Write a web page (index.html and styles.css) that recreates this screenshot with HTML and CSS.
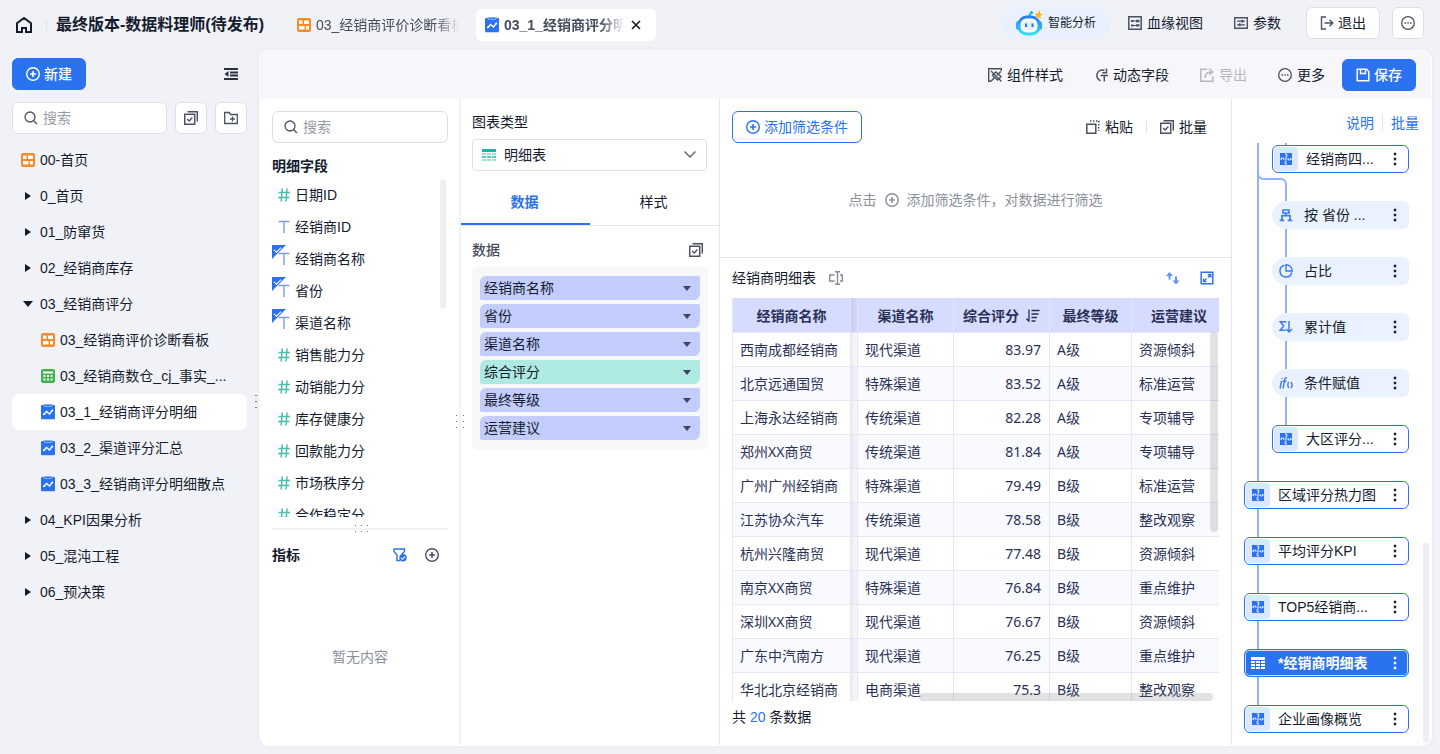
FILE: index.html
```html
<!DOCTYPE html>
<html lang="zh-CN">
<head>
    <meta charset="UTF-8">
    <meta name="viewport" content="width=device-width, initial-scale=1.0">
    <title>最终版本-数据料理师</title>
    <link rel="stylesheet" href="styles.css">
</head>
<body>
    <!-- Icon sprite -->
    <svg class="sprite" aria-hidden="true">
        <symbol id="i-home" viewBox="0 0 16 16"><path d="M6 15H1V6.200L8 1l7 5.200V15h-5v-4H6z" fill="none" stroke="currentColor" stroke-width="2"/></symbol>
        <symbol id="i-board" viewBox="0 0 14 14"><rect width="14" height="14" rx="2" fill="#fa8a25"/><path d="M2 2.500h3.500v3.500H2zM7 2.500h5v3.500H7zM2 8h5.500v3.500H2zM9 8h3v3.500H9z" fill="#fff"/></symbol>
        <symbol id="i-sheet" viewBox="0 0 14 14"><rect width="14" height="14" rx="2" fill="#3fb24f"/><path d="M2 2.500h10v2H2zM2.500 6h2v2h-2zM6 6h2v2H6zM9.500 6h2v2h-2zM2.500 9.500h2v2h-2zM6 9.500h2v2H6zM9.500 9.500h2v2h-2z" fill="#fff"/></symbol>
        <symbol id="i-chart" viewBox="0 0 14 16"><path d="M0 14h14v2H0z" fill="#c5d8fc"/><rect y="1" width="14" height="14" rx="1" fill="#2b72f0"/><path d="M2.500 0h9v1.500L10 3H4L2.500 1.500z" fill="#8bb2f8"/><path d="M4 1h6v1H4z" fill="#2b72f0"/><path d="M3 10.500l2.500-3 3 2.500 3-4" fill="none" stroke="#fff" stroke-width="1.300"/><circle cx="3" cy="10.300" r="1" fill="#fff"/><circle cx="11.300" cy="6.400" r="1" fill="#fff"/></symbol>
        <symbol id="i-close" viewBox="0 0 10 10"><path d="M1 1l8 8M9 1L1 9" stroke="currentColor" stroke-width="1.600"/></symbol>
        <symbol id="i-plus" viewBox="0 0 14 14"><circle cx="7" cy="7" r="6.300" fill="none" stroke="currentColor" stroke-width="1.400"/><path d="M7 4v6M4 7h6" stroke="currentColor" stroke-width="1.600"/></symbol>
        <symbol id="i-fold" viewBox="0 0 14 12"><path d="M0 1h14M6 4.500h8M6 7.500h8M0 11h14" stroke="currentColor" stroke-width="1.800"/><path d="M4.500 3v6L.5 6z" fill="currentColor"/></symbol>
        <symbol id="i-search" viewBox="0 0 14 14"><circle cx="6" cy="6" r="5" fill="none" stroke="currentColor" stroke-width="1.300"/><path d="M9.700 9.700l3.300 3.300" stroke="currentColor" stroke-width="1.300"/></symbol>
        <symbol id="i-batch" viewBox="0 0 14 14"><path d="M.7 3.200h10v10H.7zM3.500.8h9.800v9.700" fill="none" stroke="currentColor" stroke-width="1.500"/><path d="M3.200 8l2 2 3.200-3.500" fill="none" stroke="currentColor" stroke-width="1.300"/></symbol>
        <symbol id="i-folder" viewBox="0 0 14 14"><path d="M.7 1.500h4.500l1.500 2h6.600v9H.7z" fill="none" stroke="currentColor" stroke-width="1.300"/><path d="M8.500 5.500v5M6 8h5" stroke="currentColor" stroke-width="1.300"/></symbol>
        <symbol id="i-robot" viewBox="0 0 28 26">
            <defs><linearGradient id="robot" x1="0" y1="0" x2="0" y2="1"><stop offset="0" stop-color="#2f7bf6"/><stop offset="1" stop-color="#2be0fb"/></linearGradient></defs>
            <path d="M14 6l2-3" stroke="#19b4ee" stroke-width="2"/><circle cx="16.500" cy="2.500" r="1.600" fill="#19b4ee"/>
            <rect x="1" y="11" width="5" height="9" rx="2.500" fill="#3aa4f8"/><rect x="22" y="11" width="5" height="9" rx="2.500" fill="#3aa4f8"/>
            <rect x="4" y="7" width="20" height="17" rx="7.500" fill="#fff" stroke="url(#robot)" stroke-width="3"/>
            <rect x="7.500" y="10.500" width="13" height="9.500" rx="4.500" fill="#e4f1ff"/>
            <path d="M11 13.500v3.500M17.500 13.500v3.500" stroke="#2b6df3" stroke-width="2"/>
            <path d="M24.500 0l.8 3.500 2.700.5-2.500 1.800.5 3-2.700-1.600-2.600 1.300.8-2.500L19.500 3.800l3-.2z" fill="#ffb31f"/>
        </symbol>
        <symbol id="i-lineage" viewBox="0 0 14 14"><path d="M.8.8h12.400v12.400H.8z" fill="none" stroke="currentColor" stroke-width="1.500"/><path d="M3 4h2.500v2H3zM3 8.500h2.500v2H3zM8 3.800h3.500v2.400H8zM8 8.200h3.500v2.400H8zM5 4.500h3v1H5zM5 9h3v1H5z" fill="currentColor"/></symbol>
        <symbol id="i-param" viewBox="0 0 14 14"><path d="M.7 1.700h12.600v10.600H.7z" fill="none" stroke="currentColor" stroke-width="1.400"/><path d="M3 5.200h8M3 8.800h8" stroke="currentColor" stroke-width="1.200"/><path d="M7.500 3.700h1.700v3H7.500zM4.800 7.300h1.700v3H4.800z" fill="currentColor"/></symbol>
        <symbol id="i-exit" viewBox="0 0 14 14"><path d="M6 1H1.500v12H6M4.500 7h8M9.500 3.700L12.800 7l-3.300 3.300" fill="none" stroke="currentColor" stroke-width="1.400"/></symbol>
        <symbol id="i-more" viewBox="0 0 14 14"><circle cx="7" cy="7" r="6.300" fill="none" stroke="currentColor" stroke-width="1.300"/><path d="M3.500 6.300H5v1.500H3.500zM6.300 6.300h1.500v1.500H6.300zM9 6.300h1.500v1.500H9z" fill="currentColor"/></symbol>
        <symbol id="i-style" viewBox="0 0 14 14"><path d="M13.300 3V.7H.7v12.600H3" fill="none" stroke="currentColor" stroke-width="1.400"/><path d="M3 3l10.500 10.500M12.800 3.500L9 7.200M6.500 9.500L3 13.300M4.500 7.200L8 4l5 4.800L9.500 12z" fill="none" stroke="currentColor" stroke-width="1.400"/></symbol>
        <symbol id="i-dynamic" viewBox="0 0 14 14"><path d="M10.500 2.300A5.600 5.600 0 1 0 6.500 12.800" fill="none" stroke="currentColor" stroke-width="1.500"/><path d="M12.500.5v4.300H8.300M6.500 7.500H14M10.300 7.500v6" fill="none" stroke="currentColor" stroke-width="1.500"/></symbol>
        <symbol id="i-export" viewBox="0 0 14 14"><path d="M7 1.200H.8v12h12V8" fill="none" stroke="currentColor" stroke-width="1.500"/><path d="M5 10c0-4 2-6 6-6M9 .8L12.800 4 9 7" fill="none" stroke="currentColor" stroke-width="1.500"/></symbol>
        <symbol id="i-save" viewBox="0 0 14 14"><path d="M1.200 1.200h9.300l2.300 2.300v9.300H1.200z" fill="none" stroke="currentColor" stroke-width="1.500"/><path d="M4.500 1v4.500h5V1" fill="none" stroke="currentColor" stroke-width="1.500"/></symbol>
        <symbol id="i-paste" viewBox="0 0 14 14"><path d="M.8 4.200h9v9h-9z" fill="none" stroke="currentColor" stroke-width="1.500"/><path d="M4 1h9.500M12.700 1v10" fill="none" stroke="currentColor" stroke-width="1.500" stroke-dasharray="1.500 1.500"/></symbol>
        <symbol id="i-table" viewBox="0 0 14 12"><path d="M0 0h14v3H0z" fill="#1fb1a4"/><path d="M0 4h4v2H0zM5 4h4v2H5zM10 4h4v2h-4zM0 10h4v2H0zM5 10h4v2H5zM10 10h4v2h-4z" fill="#9fe0da"/><path d="M0 7h4v2H0zM5 7h4v2H5zM10 7h4v2h-4z" fill="#5cc9bf"/></symbol>
        <symbol id="i-table-white" viewBox="0 0 14 12"><path d="M0 0h14v3H0zM0 4h4v2H0zM5 4h4v2H5zM10 4h4v2h-4zM0 7h4v2H0zM5 7h4v2H5zM10 7h4v2h-4zM0 10h4v2H0zM5 10h4v2H5zM10 10h4v2h-4z" fill="#fff"/></symbol>
        <symbol id="i-num" viewBox="0 0 12 14"><path d="M4.200.5L3.200 13.500M9 .5L8 13.500M.5 4.500h11.500M0 9.500h11.500" fill="none" stroke="#4dbbae" stroke-width="1.500"/></symbol>
        <symbol id="i-text" viewBox="0 0 12 14"><path d="M.5 1.500h11M6 1.500V13" fill="none" stroke="#8099e0" stroke-width="1.400"/></symbol>
        <symbol id="i-filter" viewBox="0 0 14 14"><path d="M7 12.500H4V7L1 3.500V1h10.500v2.500L8.500 6.500" fill="none" stroke="#2b72f0" stroke-width="1.400"/><circle cx="10" cy="9.800" r="3.700" fill="#2b72f0"/><path d="M8 9.800l1.500 1.500 2.500-2.700" fill="none" stroke="#fff" stroke-width="1.100"/></symbol>
        <symbol id="i-rename" viewBox="0 0 14 14"><path d="M5.500 4H.7v6h4.800M11 4h2.300v6H11M6 .7h5M6 13.300h5M8.500.7v12.600" fill="none" stroke="currentColor" stroke-width="1.400"/></symbol>
        <symbol id="i-swap" viewBox="0 0 14 14"><path d="M3.500 8.500V4M10 5.500V10" stroke="#5f93f5" stroke-width="2"/><path d="M3.500 1L7 5H0zM10 13.500L6.500 9.500h7z" fill="#5f93f5"/></symbol>
        <symbol id="i-full" viewBox="0 0 14 14"><path d="M1.200 1.200h11.600v11.600H1.200z" fill="none" stroke="#2b72f0" stroke-width="1.500"/><path d="M7.800 3.500h3v3M6.500 10.500h-3v-3M10.500 3.800L7.800 6.500M3.800 10.200l2.700-2.700" fill="none" stroke="#2b72f0" stroke-width="1.300"/></symbol>
        <symbol id="i-sort" viewBox="0 0 14 14"><path d="M3 .5v12M.5 9.500L3 12.500" fill="none" stroke="currentColor" stroke-width="1.300"/><path d="M5.500 1.500h8M5.500 5h7M5.500 8.500h5.500M5.500 12h4" stroke="currentColor" stroke-width="1.300"/></symbol>
        <symbol id="i-puzzle" viewBox="0 0 12 12"><path d="M0 0h12v12H0z" fill="#2b72f0"/><path d="M6 0v1.500M6 4v4M6 10.500V12M0 6h1.500M4 6h4M10.500 6H12" stroke="#dbe7fe" stroke-width=".8"/><path d="M5 1.500h2v2H5.500M7 10.500H5v-2h1.500M1.500 7V5h2v1.500M10.500 5v2h-2V5.500" fill="none" stroke="#dbe7fe"/></symbol>
        <symbol id="i-group" viewBox="0 0 14 14"><path d="M4 2h6v3H4zM7 5v3M3 11.500V7.700h8v3.800M.7 12.300h4.500M8.800 12.300h4.500" fill="none" stroke="#3b7cf2" stroke-width="1.700"/></symbol>
        <symbol id="i-pie" viewBox="0 0 14 14"><path d="M5.500 1.200a6 6 0 1 0 7.300 7.300" fill="none" stroke="#3b7cf2" stroke-width="1.500"/><path d="M7 .8V7h6.300A6.300 6.300 0 0 0 7 .8z" fill="none" stroke="#3b7cf2" stroke-width="1.400"/></symbol>
        <symbol id="i-sum" viewBox="0 0 14 14"><path d="M7.500 1.700H1.200L4.700 6 1.200 10.300h5.300M10 1v11M7.200 9l2.800 3 3.200-3" fill="none" stroke="#3b7cf2" stroke-width="1.500"/></symbol>
        <symbol id="i-cond" viewBox="0 0 14 14"><path d="M2.500 5L1 12.500M3 2v1M8 1.800c-1.500-.5-2 .5-2.300 2.200L4 12.500M3.500 5.300h4M9.700 6c-1.200 2-1.200 4 0 6M12 6c1.500 2 1.500 4 0 6" fill="none" stroke="#3b7cf2" stroke-width="1.400"/></symbol>
        <symbol id="i-dots" viewBox="0 0 4 14"><path d="M.8.800h2.400v2.400H.8zM.8 5.800h2.400v2.400H.8zM.8 10.800h2.400v2.400H.8z" fill="currentColor"/></symbol>
        <symbol id="i-grip" viewBox="0 0 8 14"><path d="M0 0h1v1H0zM7 0h1v1H7zM0 6h1v1H0zM7 6h1v1H7zM0 12h1v1H0zM7 12h1v1H7z" fill="#6c717c"/></symbol>
        <symbol id="i-grip-v" viewBox="0 0 8 14"><path d="M0 0h2v1H0zM0 6h2v1H0zM0 12h2v1H0z" fill="#767b86"/></symbol>
        <symbol id="i-grip-h" viewBox="0 0 14 8"><path d="M0 0h1v1H0zM6 0h1v1H6zM12 0h1v1h-1zM0 6h1v1H0zM6 6h1v1H6zM12 6h1v1h-1z" fill="#6c717c"/></symbol>
    </svg>

    <!-- Top bar -->
    <header class="topbar">
        <a href="#" class="home" aria-label="首页"><svg class="icon-lg"><use href="#i-home"/></svg></a>
        <h1>最终版本-数据料理师(待发布)</h1>
        <nav class="tabs">
            <a href="#" class="tab"><svg class="icon"><use href="#i-board"/></svg><span class="tab-name">03_经销商评价诊断看板</span></a>
            <div class="tab active">
                <svg class="icon-tall"><use href="#i-chart"/></svg><span class="tab-name">03_1_经销商评分明细</span>
                <button class="plain" aria-label="关闭"><svg class="icon-sm"><use href="#i-close"/></svg></button>
            </div>
        </nav>
        <div class="top-actions">
            <button class="ai"><svg class="robot"><use href="#i-robot"/></svg>智能分析</button>
            <button class="plain lineage"><svg class="icon"><use href="#i-lineage"/></svg>血缘视图</button>
            <button class="plain param"><svg class="icon"><use href="#i-param"/></svg>参数</button>
            <button class="btn"><svg class="icon"><use href="#i-exit"/></svg>退出</button>
            <button class="btn square" aria-label="更多"><svg class="icon"><use href="#i-more"/></svg></button>
        </div>
    </header>

    <div class="layout">
        <!-- Left sidebar -->
        <aside class="sidebar">
            <div class="sidebar-head">
                <button class="btn primary"><svg class="icon"><use href="#i-plus"/></svg>新建</button>
                <button class="plain fold" aria-label="收起"><svg class="icon"><use href="#i-fold"/></svg></button>
            </div>
            <div class="sidebar-search">
                <label class="search"><svg class="icon"><use href="#i-search"/></svg><input type="text" placeholder="搜索" aria-label="搜索"></label>
                <button class="btn square" aria-label="批量"><svg class="icon"><use href="#i-batch"/></svg></button>
                <button class="btn square" aria-label="新建文件夹"><svg class="icon"><use href="#i-folder"/></svg></button>
            </div>
            <nav class="tree">
                <a href="#"><svg class="icon"><use href="#i-board"/></svg>00-首页</a>
                <a href="#"><i class="arrow"></i>0_首页</a>
                <a href="#"><i class="arrow"></i>01_防窜货</a>
                <a href="#"><i class="arrow"></i>02_经销商库存</a>
                <a href="#"><i class="arrow open"></i>03_经销商评分</a>
                <a href="#" class="child"><svg class="icon"><use href="#i-board"/></svg>03_经销商评价诊断看板</a>
                <a href="#" class="child"><svg class="icon"><use href="#i-sheet"/></svg>03_经销商数仓_cj_事实_...</a>
                <a href="#" class="child current"><svg class="icon-tall"><use href="#i-chart"/></svg>03_1_经销商评分明细</a>
                <a href="#" class="child"><svg class="icon-tall"><use href="#i-chart"/></svg>03_2_渠道评分汇总</a>
                <a href="#" class="child"><svg class="icon-tall"><use href="#i-chart"/></svg>03_3_经销商评分明细散点</a>
                <a href="#"><i class="arrow"></i>04_KPI因果分析</a>
                <a href="#"><i class="arrow"></i>05_混沌工程</a>
                <a href="#"><i class="arrow"></i>06_预决策</a>
            </nav>
            <svg class="grip-side"><use href="#i-grip-v"/></svg>
        </aside>

        <main class="panel">
            <div class="toolbar">
                <button class="plain"><svg class="icon"><use href="#i-style"/></svg>组件样式</button>
                <button class="plain"><svg class="icon"><use href="#i-dynamic"/></svg>动态字段</button>
                <button class="plain" disabled><svg class="icon"><use href="#i-export"/></svg>导出</button>
                <button class="plain"><svg class="icon"><use href="#i-more"/></svg>更多</button>
                <button class="btn primary"><svg class="icon"><use href="#i-save"/></svg>保存</button>
            </div>

            <div class="columns">
                <!-- Fields -->
                <section class="fields">
                    <label class="search"><svg class="icon"><use href="#i-search"/></svg><input type="text" placeholder="搜索" aria-label="搜索字段"></label>
                    <h2>明细字段</h2>
                    <div class="field-area">
                        <ul class="field-list">
                            <li><svg class="field-icon"><use href="#i-num"/></svg>日期ID</li>
                            <li><svg class="field-icon"><use href="#i-text"/></svg>经销商ID</li>
                            <li class="used"><svg class="field-icon"><use href="#i-text"/></svg>经销商名称</li>
                            <li class="used"><svg class="field-icon"><use href="#i-text"/></svg>省份</li>
                            <li class="used"><svg class="field-icon"><use href="#i-text"/></svg>渠道名称</li>
                            <li><svg class="field-icon"><use href="#i-num"/></svg>销售能力分</li>
                            <li><svg class="field-icon"><use href="#i-num"/></svg>动销能力分</li>
                            <li><svg class="field-icon"><use href="#i-num"/></svg>库存健康分</li>
                            <li><svg class="field-icon"><use href="#i-num"/></svg>回款能力分</li>
                            <li><svg class="field-icon"><use href="#i-num"/></svg>市场秩序分</li>
                            <li><svg class="field-icon"><use href="#i-num"/></svg>合作稳定分</li>
                        </ul>
                        <span class="scrollbar"></span>
                    </div>
                    <div class="metrics">
                        <svg class="grip-line"><use href="#i-grip-h"/></svg>
                        <div class="metrics-head">
                            <h2>指标</h2>
                            <button class="plain" aria-label="筛选"><svg class="icon"><use href="#i-filter"/></svg></button>
                            <button class="plain" aria-label="添加"><svg class="icon"><use href="#i-plus"/></svg></button>
                        </div>
                        <p class="empty">暂无内容</p>
                    </div>
                    <svg class="grip-col"><use href="#i-grip"/></svg>
                </section>

                <!-- Chart config -->
                <section class="config">
                    <div class="chart-type">
                        <label for="chartType">图表类型</label>
                        <div class="select-wrap">
                            <svg class="select-icon"><use href="#i-table"/></svg>
                            <select id="chartType"><option>明细表</option></select>
                            <svg class="chevron" viewBox="0 0 12 7"><path d="M.5.5L6 6 11.500.5" fill="none" stroke="#5a6070" stroke-width="1.400"/></svg>
                        </div>
                    </div>
                    <div class="config-tabs">
                        <button class="active">数据</button>
                        <button>样式</button>
                    </div>
                    <div class="data-head">
                        <h3>数据</h3>
                        <button class="plain" aria-label="批量"><svg class="icon"><use href="#i-batch"/></svg></button>
                    </div>
                    <div class="pills">
                        <button class="pill">经销商名称</button>
                        <button class="pill">省份</button>
                        <button class="pill">渠道名称</button>
                        <button class="pill measure">综合评分</button>
                        <button class="pill">最终等级</button>
                        <button class="pill">运营建议</button>
                    </div>
                </section>

                <!-- Preview -->
                <section class="preview">
                    <div class="filters">
                        <div class="filter-bar">
                            <button class="btn outline"><svg class="icon"><use href="#i-plus"/></svg>添加筛选条件</button>
                            <button class="plain paste"><svg class="icon"><use href="#i-paste"/></svg>粘贴</button>
                            <button class="plain batch"><svg class="icon"><use href="#i-batch"/></svg>批量</button>
                        </div>
                        <p class="hint">点击 <svg class="icon"><use href="#i-plus"/></svg> 添加筛选条件，对数据进行筛选</p>
                    </div>
                    <div class="result">
                        <div class="result-head">
                            <h3>经销商明细表</h3>
                            <button class="plain rename" aria-label="重命名"><svg class="icon"><use href="#i-rename"/></svg></button>
                            <button class="plain" aria-label="切换"><svg class="icon"><use href="#i-swap"/></svg></button>
                            <button class="plain" aria-label="全屏"><svg class="icon"><use href="#i-full"/></svg></button>
                        </div>
                        <div class="table-wrap">
                            <table>
                                <colgroup><col class="c-name"><col class="c-channel"><col class="c-score"><col class="c-level"><col class="c-advice"></colgroup>
                                <thead>
                                    <tr><th>经销商名称</th><th>渠道名称</th><th>综合评分<svg class="sort"><use href="#i-sort"/></svg></th><th>最终等级</th><th>运营建议</th></tr>
                                </thead>
                                <tbody>
                                    <tr><td>西南成都经销商</td><td>现代渠道</td><td>83.97</td><td>A级</td><td>资源倾斜</td></tr>
                                    <tr><td>北京远通国贸</td><td>特殊渠道</td><td>83.52</td><td>A级</td><td>标准运营</td></tr>
                                    <tr><td>上海永达经销商</td><td>传统渠道</td><td>82.28</td><td>A级</td><td>专项辅导</td></tr>
                                    <tr><td>郑州XX商贸</td><td>传统渠道</td><td>81.84</td><td>A级</td><td>专项辅导</td></tr>
                                    <tr><td>广州广州经销商</td><td>特殊渠道</td><td>79.49</td><td>B级</td><td>标准运营</td></tr>
                                    <tr><td>江苏协众汽车</td><td>传统渠道</td><td>78.58</td><td>B级</td><td>整改观察</td></tr>
                                    <tr><td>杭州兴隆商贸</td><td>现代渠道</td><td>77.48</td><td>B级</td><td>资源倾斜</td></tr>
                                    <tr><td>南京XX商贸</td><td>特殊渠道</td><td>76.84</td><td>B级</td><td>重点维护</td></tr>
                                    <tr><td>深圳XX商贸</td><td>现代渠道</td><td>76.67</td><td>B级</td><td>资源倾斜</td></tr>
                                    <tr><td>广东中汽南方</td><td>现代渠道</td><td>76.25</td><td>B级</td><td>重点维护</td></tr>
                                    <tr><td>华北北京经销商</td><td>电商渠道</td><td>75.3</td><td>B级</td><td>整改观察</td></tr>
                                </tbody>
                            </table>
                            <span class="bar-y"></span>
                            <span class="bar-x"></span>
                        </div>
                        <p class="total">共 <b>20</b> 条数据</p>
                    </div>
                </section>

                <!-- Steps -->
                <section class="steps">
                    <div class="step-links"><a href="#">说明</a><a href="#">批量</a></div>
                    <div class="flow">
                        <svg class="wires"><path d="M26 0V562M54 0V10M26 30q0 6 6 6h17q5 0 5 6V290"/></svg>
                        <div class="node sub"><span class="badge"><svg class="icon-md"><use href="#i-puzzle"/></svg></span><span>经销商四...</span><button class="plain" aria-label="更多"><svg class="dots"><use href="#i-dots"/></svg></button></div>
                        <div class="node sub op"><span class="badge"><svg class="icon"><use href="#i-group"/></svg></span><span>按 省份 ...</span><button class="plain" aria-label="更多"><svg class="dots"><use href="#i-dots"/></svg></button></div>
                        <div class="node sub op"><span class="badge"><svg class="icon"><use href="#i-pie"/></svg></span><span>占比</span><button class="plain" aria-label="更多"><svg class="dots"><use href="#i-dots"/></svg></button></div>
                        <div class="node sub op"><span class="badge"><svg class="icon"><use href="#i-sum"/></svg></span><span>累计值</span><button class="plain" aria-label="更多"><svg class="dots"><use href="#i-dots"/></svg></button></div>
                        <div class="node sub op"><span class="badge"><svg class="icon"><use href="#i-cond"/></svg></span><span>条件赋值</span><button class="plain" aria-label="更多"><svg class="dots"><use href="#i-dots"/></svg></button></div>
                        <div class="node sub"><span class="badge"><svg class="icon-md"><use href="#i-puzzle"/></svg></span><span>大区评分...</span><button class="plain" aria-label="更多"><svg class="dots"><use href="#i-dots"/></svg></button></div>
                        <div class="node"><span class="badge"><svg class="icon-md"><use href="#i-puzzle"/></svg></span><span>区域评分热力图</span><button class="plain" aria-label="更多"><svg class="dots"><use href="#i-dots"/></svg></button></div>
                        <div class="node"><span class="badge"><svg class="icon-md"><use href="#i-puzzle"/></svg></span><span>平均评分KPI</span><button class="plain" aria-label="更多"><svg class="dots"><use href="#i-dots"/></svg></button></div>
                        <div class="node"><span class="badge"><svg class="icon-md"><use href="#i-puzzle"/></svg></span><span>TOP5经销商...</span><button class="plain" aria-label="更多"><svg class="dots"><use href="#i-dots"/></svg></button></div>
                        <div class="node selected"><span class="badge"><svg class="icon"><use href="#i-table-white"/></svg></span><span>*经销商明细表</span><button class="plain" aria-label="更多"><svg class="dots"><use href="#i-dots"/></svg></button></div>
                        <div class="node"><span class="badge"><svg class="icon-md"><use href="#i-puzzle"/></svg></span><span>企业画像概览</span><button class="plain" aria-label="更多"><svg class="dots"><use href="#i-dots"/></svg></button></div>
                    </div>
                    <span class="scrollbar"></span>
                </section>
            </div>
        </main>
    </div>
</body>
</html>
```
FILE: styles.css
```css
* {
    box-sizing: border-box;
}

body {
    margin: 0;
    height: 100vh;
    display: flex;
    flex-direction: column;
    overflow: hidden;
    background-color: #f1f2f8;
    color: #141c2e;
    font-family: "Liberation Sans", "Noto Sans CJK SC", sans-serif;
    font-size: 14px;
    line-height: 20px;
}

h1, h2, h3, p, ul {
    margin: 0;
    padding: 0;
    font-size: 14px;
}

ul {
    list-style: none;
}

a {
    color: inherit;
    text-decoration: none;
}

button, input, select {
    font: inherit;
    color: inherit;
}

svg {
    display: block;
    flex: none;
}

.sprite {
    position: absolute;
    width: 0;
    height: 0;
}

.icon {
    width: 14px;
    height: 14px;
}

.icon-sm {
    width: 10px;
    height: 10px;
}

.icon-md {
    width: 12px;
    height: 12px;
}

.icon-lg {
    width: 16px;
    height: 16px;
}

.icon-tall {
    width: 14px;
    height: 16px;
}

/* Buttons */
.plain {
    display: flex;
    align-items: center;
    gap: 5px;
    padding: 0;
    border: none;
    background: none;
    white-space: nowrap;
    cursor: pointer;
}

.plain .icon, .btn .icon {
    color: #4a5162;
}

.plain:disabled {
    color: #b3b7c0;
    cursor: default;
}

.plain:disabled .icon {
    color: #b3b7c0;
}

.btn {
    display: flex;
    align-items: center;
    justify-content: center;
    gap: 4px;
    height: 32px;
    padding: 0 13px;
    border: 1px solid #dcdfe6;
    border-radius: 6px;
    background-color: white;
    white-space: nowrap;
    cursor: pointer;
}

.btn.square {
    flex: none;
    width: 32px;
    padding: 0;
}

.btn.primary {
    border-color: #2b72f0;
    background-color: #2b72f0;
    color: white;
    font-weight: 500;
}

.btn.primary .icon {
    color: white;
}

.btn.outline {
    border-color: #2b72f0;
    color: #2b72f0;
}

.btn.outline .icon {
    color: #2b72f0;
}

.search {
    display: flex;
    align-items: center;
    gap: 5px;
    height: 32px;
    padding: 0 11px;
    border: 1px solid #dcdfe6;
    border-radius: 6px;
    background-color: white;
    color: #4a5162;
}

.search input {
    flex: 1;
    min-width: 0;
    padding: 0;
    border: none;
    outline: none;
    background: none;
}

.search input::placeholder {
    color: #979ca6;
}

/* Top bar */
.topbar {
    display: flex;
    align-items: center;
    flex: none;
    height: 50px;
    padding: 0 16px;
}

.home {
    padding-right: 15px;
    background: linear-gradient(#e0e2e8, #e0e2e8) right center / 1px 12px no-repeat;
}

.topbar h1 {
    margin-left: 9px;
    font-size: 16px;
    font-weight: bold;
    white-space: nowrap;
}

.tabs {
    display: flex;
    gap: 8px;
    margin-left: 24px;
}

.tab {
    display: flex;
    align-items: center;
    gap: 5px;
    width: 180px;
    height: 32px;
    padding: 0 9px;
    border-radius: 6px;
    color: #454c5e;
}

.tab-name {
    flex: 1;
    overflow: hidden;
    white-space: nowrap;
    -webkit-mask-image: linear-gradient(to left, transparent, black 24px);
    mask-image: linear-gradient(to left, transparent, black 24px);
}

.tab.active {
    background-color: white;
    font-weight: bold;
}

.tab.active .plain {
    padding: 3px 6px 3px 2px;
    color: #141c2e;
}

.top-actions {
    display: flex;
    align-items: center;
    margin: 0 0 4px auto;
}

.ai {
    display: flex;
    align-items: center;
    gap: 5px;
    height: 32px;
    padding: 0 14px;
    border: none;
    border-radius: 16px;
    background-color: #e9f1fe;
    font-size: 12px;
    cursor: pointer;
}

.robot {
    width: 28px;
    height: 26px;
}

.lineage {
    margin-left: 18px;
}

.param {
    margin-left: 31px;
}

.top-actions .btn {
    margin-left: 12px;
}

.top-actions .param + .btn {
    margin-left: 25px;
}

/* Sidebar */
.layout {
    display: flex;
    flex: 1;
    min-height: 0;
    padding: 0 8px 8px 0;
}

.sidebar {
    position: relative;
    flex: none;
    width: 259px;
    padding: 8px 12px;
}

.sidebar-head {
    display: flex;
    align-items: center;
    justify-content: space-between;
}

.fold {
    margin-right: 9px;
}

.fold .icon {
    color: #2a3142;
}

.sidebar-search {
    display: flex;
    gap: 8px;
    margin-top: 12px;
}

.sidebar-search .search {
    flex: 1;
    min-width: 0;
}

.tree {
    margin-top: 8px;
}

.tree a {
    display: flex;
    align-items: center;
    gap: 5px;
    height: 36px;
    padding-left: 9px;
    border-radius: 6px;
    white-space: nowrap;
}

.tree a.child {
    padding-left: 29px;
}

.tree a.current {
    background-color: white;
}

.arrow {
    display: flex;
    justify-content: center;
    width: 14px;
}

.arrow::before {
    content: "";
    border: 4px solid transparent;
    border-left: 6px solid #141c2e;
    border-right: none;
}

.arrow.open::before {
    border: 5px solid transparent;
    border-top: 6px solid #141c2e;
    border-bottom: none;
}

.grip-side {
    position: absolute;
    top: 345px;
    right: -4px;
    width: 8px;
    height: 14px;
}

/* Main panel */
.panel {
    position: relative;
    display: flex;
    flex-direction: column;
    flex: 1;
    min-width: 0;
    overflow: hidden;
    border: 1px solid white;
    border-radius: 10px;
    background-color: white;
    box-shadow: 0 0 4px rgba(40, 50, 90, 0.06);
}

.toolbar {
    display: flex;
    align-items: center;
    justify-content: flex-end;
    flex: none;
    gap: 31px;
    height: 48px;
    padding-right: 15px;
    background-color: #f6f6fb;
}

.toolbar .btn {
    margin-left: -14px;
}

.columns {
    display: flex;
    flex: 1;
    min-height: 0;
}

/* Fields */
.fields {
    position: relative;
    display: flex;
    flex-direction: column;
    flex: none;
    width: 201px;
    padding: 12px 11px 0 12px;
    border-right: 2px solid #f1f2f4;
}

.fields h2 {
    font-weight: bold;
}

.fields > h2 {
    margin: 13px 0 3px;
}

.field-area {
    position: relative;
    flex: 1;
    min-height: 0;
}

.field-list {
    height: 100%;
    overflow: hidden;
}

.field-list li {
    position: relative;
    display: flex;
    align-items: center;
    gap: 5px;
    height: 32px;
    padding-left: 6px;
}

.field-icon {
    width: 12px;
    height: 14px;
}

.field-list .used::before {
    content: "";
    position: absolute;
    left: 0;
    top: 2px;
    width: 14px;
    height: 14px;
    background-color: #2b72f0;
    clip-path: polygon(0 0, 100% 0, 0 100%);
}

.field-list .used::after {
    content: "";
    position: absolute;
    left: 2px;
    top: 4px;
    width: 6px;
    height: 3px;
    border: solid white;
    border-width: 0 0 1px 1px;
    transform: rotate(-45deg);
}

.scrollbar {
    position: absolute;
    width: 6px;
    border-radius: 3px;
    background-color: #eeeff1;
}

.field-area .scrollbar {
    top: 0;
    right: 2px;
    height: 130px;
}

.metrics {
    position: relative;
    flex: none;
    height: 217px;
    margin-top: 11px;
    border-top: 2px solid #f1f2f4;
}

.metrics-head {
    display: flex;
    align-items: center;
    gap: 18px;
    margin-top: 15px;
    padding-right: 9px;
}

.metrics-head h2 {
    flex: 1;
}

.empty {
    margin-top: 82px;
    color: #8b909b;
    text-align: center;
}

.grip-line {
    position: absolute;
    top: -5px;
    left: 83px;
    width: 14px;
    height: 8px;
}

.grip-col {
    position: absolute;
    top: 316px;
    right: -5px;
    z-index: 1;
    width: 8px;
    height: 14px;
}

/* Chart config */
.config {
    flex: none;
    width: 259px;
    border-right: 1px solid #e4e6ea;
}

.chart-type {
    padding: 13px 12px 0 11px;
}

.chart-type label {
    display: block;
    margin-bottom: 7px;
}

.select-wrap {
    position: relative;
}

.select-wrap select {
    width: 100%;
    height: 32px;
    padding: 0 31px;
    border: 1px solid #dcdfe6;
    border-radius: 4px;
    background-color: white;
    -webkit-appearance: none;
    appearance: none;
}

.select-icon {
    position: absolute;
    top: 10px;
    left: 10px;
    width: 14px;
    height: 12px;
}

.chevron {
    position: absolute;
    top: 12px;
    right: 11px;
    width: 12px;
    height: 7px;
}

.config-tabs {
    display: flex;
    height: 47px;
    margin-top: 8px;
    border-bottom: 1px solid #e4e6ea;
}

.config-tabs button {
    flex: 1;
    padding: 2px 2px 0 0;
    border: none;
    border-bottom: 2px solid transparent;
    background: none;
    cursor: pointer;
}

.config-tabs .active {
    border-bottom-color: #2b72f0;
    color: #2b72f0;
    font-weight: bold;
}

.data-head {
    display: flex;
    align-items: center;
    justify-content: space-between;
    margin: 14px 16px 6px 11px;
}

.data-head h3 {
    color: #454c5e;
    font-weight: 500;
}

.pills {
    display: flex;
    flex-direction: column;
    gap: 4px;
    margin: 0 11px;
    padding: 10px 8px;
    border-radius: 6px;
    background-color: #f7f8fa;
}

.pill {
    display: flex;
    align-items: center;
    justify-content: space-between;
    height: 24px;
    padding: 0 9px 0 4px;
    border: none;
    border-radius: 6px 2px;
    background-color: #c3cdfb;
    cursor: pointer;
}

.pill::after {
    content: "";
    border: 4px solid transparent;
    border-top: 5px solid #3b4560;
    border-bottom: none;
}

.pill.measure {
    background-color: #aeeae2;
}

/* Preview */
.preview {
    display: flex;
    flex-direction: column;
    flex: 1;
    min-width: 0;
    border-right: 1px solid #e4e6ea;
}

.filters {
    flex: none;
    height: 159px;
    padding: 12px;
    border-bottom: 1px solid #e4e6ea;
}

.filter-bar {
    display: flex;
    align-items: center;
    padding-right: 12px;
}

.paste {
    margin-left: auto;
}

.batch {
    margin-left: 13px;
    padding-left: 14px;
    background: linear-gradient(#e0e2e8, #e0e2e8) left center / 1px 12px no-repeat;
}

.hint {
    display: flex;
    align-items: center;
    justify-content: center;
    gap: 8px;
    margin-top: 47px;
    color: #8b909b;
}

.result {
    display: flex;
    flex-direction: column;
    flex: 1;
    min-height: 0;
    padding: 0 12px;
}

.result-head {
    display: flex;
    align-items: center;
    gap: 20px;
    flex: none;
    height: 40px;
    padding-right: 5px;
}

.result-head h3 {
    font-weight: normal;
}

.rename {
    margin: 0 auto 0 -7px;
}

.rename .icon {
    color: #858b98;
}

.table-wrap {
    position: relative;
    flex: 1;
    min-height: 0;
    overflow: hidden;
}

table {
    width: 495px;
    border-collapse: separate;
    border-spacing: 0;
    border-left: 1px solid #e5e7f6;
    table-layout: fixed;
    color: #2a3156;
    font-family: "Noto Sans", "Noto Sans CJK SC", sans-serif;
}

.c-name {
    width: 125px;
}

.c-channel, .c-score {
    width: 96px;
}

.c-level {
    width: 82px;
}

.c-advice {
    width: 95px;
}

th, td {
    position: relative;
    height: 34px;
    padding: 0 7px;
    border-right: 1px solid #e5e7f6;
    border-bottom: 1px solid #e5e7f6;
    text-align: left;
    white-space: nowrap;
}

th {
    height: 35px;
    padding-top: 2px;
    background-color: #d6dcff;
    text-align: center;
}

th:first-child, td:first-child {
    padding-right: 14px;
}

/* shadow of the frozen column */
th:first-child::after, td:first-child::after {
    content: "";
    position: absolute;
    top: 0;
    right: 0;
    bottom: 0;
    width: 6px;
    border-left: 1px solid #e5e7f6;
    background: linear-gradient(to right, rgba(60, 70, 130, 0.1), rgba(60, 70, 130, 0.03));
}

tbody tr:nth-child(even) {
    background-color: #f9faff;
}

td:nth-child(3) {
    padding-right: 8px;
    text-align: right;
}

.sort {
    display: inline-block;
    width: 14px;
    height: 14px;
    margin-left: 7px;
    vertical-align: -2px;
}

.bar-y, .bar-x {
    position: absolute;
    border-radius: 4px;
    background-color: rgba(110, 112, 120, 0.2);
}

.bar-y {
    top: 34px;
    right: 1px;
    width: 8px;
    height: 200px;
}

.bar-x {
    right: 6px;
    bottom: 0;
    width: 294px;
    height: 8px;
}

.total {
    flex: none;
    margin: 6px 0 18px;
}

.total b {
    color: #2b72f0;
    font-weight: normal;
}

/* Steps */
.steps {
    position: relative;
    display: flex;
    flex-direction: column;
    flex: none;
    width: 199px;
}

.step-links {
    display: flex;
    justify-content: flex-end;
    padding: 14px 12px 10px 0;
    color: #2b72f0;
}

.step-links a + a {
    margin-left: 8px;
    padding-left: 9px;
    background: linear-gradient(#e0e2e8, #e0e2e8) left center / 1px 16px no-repeat;
}

.flow {
    position: relative;
    display: flex;
    flex-direction: column;
    gap: 28px;
    flex: 1;
    min-height: 0;
    overflow: hidden;
    padding: 2px 22px 0 12px;
}

.wires {
    position: absolute;
    top: 0;
    left: 0;
    width: 100%;
    height: 562px;
    fill: none;
    stroke: #92b4f8;
    stroke-width: 2;
}

.node {
    position: relative;
    display: flex;
    align-items: center;
    flex: none;
    height: 28px;
    padding: 0 11px 0 1px;
    border: 1px solid #2b72f0;
    border-radius: 6px;
    background-color: white;
    white-space: nowrap;
}

.node.sub {
    margin-left: 28px;
}

.node .plain {
    margin-left: auto;
}

.badge {
    display: flex;
    align-items: center;
    justify-content: center;
    width: 24px;
    height: 24px;
    margin-right: 8px;
    border-radius: 4px;
    background-color: #dbe7fe;
}

.node.op {
    border-color: #eaf2ff;
    border-radius: 14px 6px 6px 14px;
    background-color: #eaf2ff;
}

.node.op .badge {
    margin-right: 6px;
    background: none;
}

.node.selected {
    background-color: #2b72f0;
    box-shadow: inset 0 0 0 1px #cfdffd;
    color: white;
    font-weight: bold;
}

.node.selected .badge {
    background: none;
}

.dots {
    width: 4px;
    height: 14px;
}

.steps .scrollbar {
    right: 2px;
    bottom: 2px;
    height: 200px;
}
```
